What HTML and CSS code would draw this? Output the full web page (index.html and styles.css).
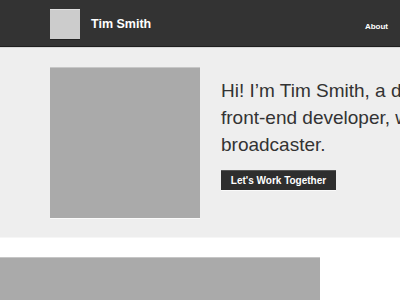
FILE: index.html
```html
<!DOCTYPE html>
<html lang="en">
<head>
    <meta charset="UTF-8">
    <meta name="viewport" content="width=device-width, initial-scale=1.0">
    <title>Tim Smith</title>
    <link rel="stylesheet" href="styles.css">
</head>
<body>
    <header class="site-header">
        <div class="brand">
            <div class="logo"></div>
            <span class="brand-name">Tim Smith</span>
        </div>
        <nav class="nav">
            <a href="#" class="nav-link">About</a>
        </nav>
    </header>

    <section class="hero">
        <div class="hero-photo"></div>
        <div class="hero-copy">
            <p class="intro">Hi! I’m Tim Smith, a designer and front-end developer, writer and broadcaster.</p>
            <a href="#" class="cta">Let's Work Together</a>
        </div>
    </section>

    <section class="work">
        <div class="work-slide"></div>
    </section>
</body>
</html>
```

FILE: styles.css
```css
* {
    box-sizing: border-box;
}

html,
body {
    overflow: hidden;
}

body {
    margin: 0;
    font-family: "Liberation Sans", Arial, sans-serif;
    color: #333;
    background: #fff;
}

/* Header */
.site-header {
    height: 47px;
    background: #333;
    border-bottom: 1px solid #1f1f1f;
    box-shadow: 0 1px 0 #d8d8d8;
    display: flex;
    align-items: center;
    justify-content: space-between;
    padding: 1px 12px 0 50px;
}

.brand {
    display: flex;
    align-items: center;
    gap: 11px;
}

.logo {
    width: 30px;
    height: 30px;
    background: #ccc;
    border-top: 1px solid #e0e0e0;
    box-shadow: 0 1px 0 #222;
}

.brand-name {
    color: #fff;
    font-size: 12.5px;
    font-weight: bold;
}

.nav-link {
    color: #fff;
    font-size: 8px;
    font-weight: bold;
    text-decoration: none;
}

/* Hero */
.hero {
    margin-top: 1px;
    background: #eee;
    border-bottom: 1px solid #f6f6f6;
    display: flex;
    gap: 21px;
    padding: 19px 0 19px 50px;
}

.hero-photo {
    flex-shrink: 0;
    width: 150px;
    height: 151px;
    background: #aaa;
    border-top: 1px solid #c6c6c6;
    box-shadow: 0 1px 0 #fafafa;
}

.hero-copy {
    flex-shrink: 0;
    width: 300px;
    padding-top: 10px;
}

.intro {
    margin: 0 0 12px;
    font-size: 19px;
    line-height: 27px;
}

.cta {
    display: inline-block;
    width: 115px;
    height: 20px;
    line-height: 20px;
    text-align: center;
    background: #2e2e2e;
    border-top: 1px solid #555;
    box-shadow: 0 1px 0 #fafafa;
    color: #fff;
    font-size: 10px;
    font-weight: bold;
    text-decoration: none;
}

/* Work */
.work {
    padding-top: 19px;
}

.work-slide {
    width: 320px;
    height: 43px;
    background: #aaa;
    border-top: 1px solid #c6c6c6;
}
```
